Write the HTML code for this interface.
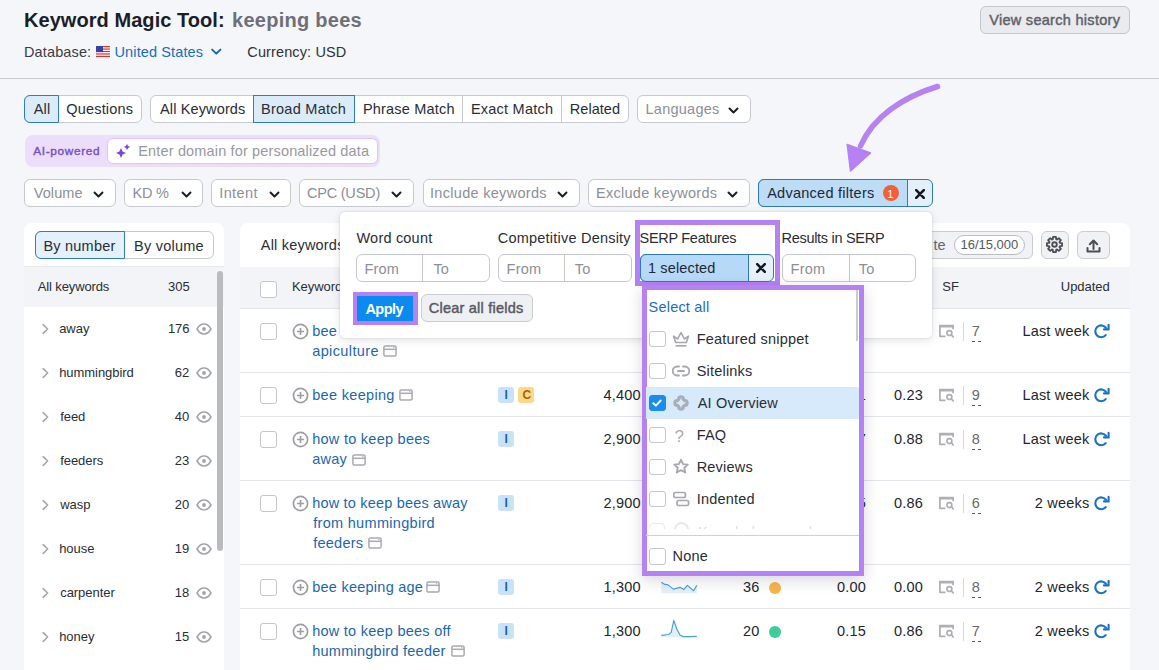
<!DOCTYPE html>
<html><head><meta charset="utf-8"><title>Keyword Magic Tool</title>
<style>
html,body{margin:0;padding:0;}
body{width:1159px;height:670px;overflow:hidden;position:relative;background:#f5f6f9;font-family:"Liberation Sans", sans-serif;}
.b{position:absolute;}
.t{position:absolute;white-space:nowrap;line-height:0;}
</style></head><body>
<svg class="b" style="left:96px;top:46px;z-index:1" width="14" height="11" viewBox="0 0 14 11">
<rect width="14" height="11" fill="#fff"/>
<g fill="#d8322f"><rect y="0" width="14" height="1.2"/><rect y="2.45" width="14" height="1.2"/><rect y="4.9" width="14" height="1.2"/><rect y="7.35" width="14" height="1.2"/><rect y="9.8" width="14" height="1.2"/></g>
<rect width="7" height="6.1" fill="#3b3f9e"/></svg>
<svg class="b" style="left:210.5px;top:48px;z-index:1" width="11" height="8" viewBox="0 0 11 8"><path d="M1.2 1.6 L5.3 5.6 L9.4 1.6" fill="none" stroke="#1b67ad" stroke-width="2" stroke-linecap="round" stroke-linejoin="round"/></svg>
<div class="b" style="left:980px;top:6px;width:150px;height:28px;background:#e9ebef;border-radius:6px;z-index:0;box-sizing:border-box;border:1px solid #c3c6cd;"></div>
<div class="b" style="left:0px;top:78px;width:1159px;height:1px;background:#c9cbd1;border-radius:0px;z-index:0;"></div>
<div class="b" style="left:24px;top:95px;width:118px;height:28px;background:#fff;border-radius:6px;z-index:0;box-sizing:border-box;border:1px solid #c6c9d0;"></div>
<div class="b" style="left:24px;top:95px;width:35px;height:28px;background:#dcebf8;border-radius:6px 0 0 6px;z-index:1;box-sizing:border-box;border:1px solid #2f7cc0;"></div>
<div class="b" style="left:150px;top:95px;width:479px;height:28px;background:#fff;border-radius:6px;z-index:0;box-sizing:border-box;border:1px solid #c6c9d0;"></div>
<div class="b" style="left:253px;top:95px;width:102px;height:28px;background:#dcebf8;border-radius:0px;z-index:1;box-sizing:border-box;border:1px solid #2f7cc0;"></div>
<div class="b" style="left:462px;top:96px;width:1px;height:26px;background:#c6c9d0;border-radius:0px;z-index:1;"></div>
<div class="b" style="left:561px;top:96px;width:1px;height:26px;background:#c6c9d0;border-radius:0px;z-index:1;"></div>
<div class="b" style="left:637px;top:95px;width:114px;height:28px;background:#fff;border-radius:6px;z-index:0;box-sizing:border-box;border:1px solid #c6c9d0;"></div>
<svg class="b" style="left:728.3px;top:106.5px;z-index:2" width="11" height="7" viewBox="0 0 11 7"><path d="M1.5 1.5 L5.5 5.5 L9.5 1.5" fill="none" stroke="#1b1e27" stroke-width="2" stroke-linecap="round" stroke-linejoin="round"/></svg>
<div class="b" style="left:25px;top:135px;width:355px;height:32px;background:#ecdefa;border-radius:8px;z-index:0;"></div>
<div class="b" style="left:107px;top:138px;width:271px;height:26px;background:#fff;border-radius:6px;z-index:1;box-sizing:border-box;border:1px solid #dcc6f7;"></div>
<svg class="b" style="left:115px;top:143px;z-index:2" width="16" height="16" viewBox="0 0 16 16">
<path d="M6 5 L7.6 8.4 L11 10 L7.6 11.6 L6 15 L4.4 11.6 L1 10 L4.4 8.4 Z" fill="#7c45e0"/>
<path d="M12 0.9 L13.1 2.9 L15.1 4 L13.1 5.1 L12 7.1 L10.9 5.1 L8.9 4 L10.9 2.9 Z" fill="#7c45e0"/></svg>
<div class="b" style="left:24px;top:179px;width:92px;height:28px;background:#fff;border-radius:6px;z-index:0;box-sizing:border-box;border:1px solid #c6c9d0;"></div>
<svg class="b" style="left:93.3px;top:190.5px;z-index:2" width="11" height="7" viewBox="0 0 11 7"><path d="M1.5 1.5 L5.5 5.5 L9.5 1.5" fill="none" stroke="#1b1e27" stroke-width="2" stroke-linecap="round" stroke-linejoin="round"/></svg>
<div class="b" style="left:124px;top:179px;width:79px;height:28px;background:#fff;border-radius:6px;z-index:0;box-sizing:border-box;border:1px solid #c6c9d0;"></div>
<svg class="b" style="left:180.7px;top:190.5px;z-index:2" width="11" height="7" viewBox="0 0 11 7"><path d="M1.5 1.5 L5.5 5.5 L9.5 1.5" fill="none" stroke="#1b1e27" stroke-width="2" stroke-linecap="round" stroke-linejoin="round"/></svg>
<div class="b" style="left:211px;top:179px;width:80px;height:28px;background:#fff;border-radius:6px;z-index:0;box-sizing:border-box;border:1px solid #c6c9d0;"></div>
<svg class="b" style="left:268.5px;top:190.5px;z-index:2" width="11" height="7" viewBox="0 0 11 7"><path d="M1.5 1.5 L5.5 5.5 L9.5 1.5" fill="none" stroke="#1b1e27" stroke-width="2" stroke-linecap="round" stroke-linejoin="round"/></svg>
<div class="b" style="left:299px;top:179px;width:115px;height:28px;background:#fff;border-radius:6px;z-index:0;box-sizing:border-box;border:1px solid #c6c9d0;"></div>
<svg class="b" style="left:390.8px;top:190.5px;z-index:2" width="11" height="7" viewBox="0 0 11 7"><path d="M1.5 1.5 L5.5 5.5 L9.5 1.5" fill="none" stroke="#1b1e27" stroke-width="2" stroke-linecap="round" stroke-linejoin="round"/></svg>
<div class="b" style="left:423px;top:179px;width:157px;height:28px;background:#fff;border-radius:6px;z-index:0;box-sizing:border-box;border:1px solid #c6c9d0;"></div>
<svg class="b" style="left:557.2px;top:190.5px;z-index:2" width="11" height="7" viewBox="0 0 11 7"><path d="M1.5 1.5 L5.5 5.5 L9.5 1.5" fill="none" stroke="#1b1e27" stroke-width="2" stroke-linecap="round" stroke-linejoin="round"/></svg>
<div class="b" style="left:588px;top:179px;width:162px;height:28px;background:#fff;border-radius:6px;z-index:0;box-sizing:border-box;border:1px solid #c6c9d0;"></div>
<svg class="b" style="left:727.3px;top:190.5px;z-index:2" width="11" height="7" viewBox="0 0 11 7"><path d="M1.5 1.5 L5.5 5.5 L9.5 1.5" fill="none" stroke="#1b1e27" stroke-width="2" stroke-linecap="round" stroke-linejoin="round"/></svg>
<div class="b" style="left:758px;top:179px;width:175px;height:28px;background:#e3eff9;border-radius:6px;z-index:0;box-sizing:border-box;border:1px solid #2f79bd;"></div>
<div class="b" style="left:758px;top:179px;width:150px;height:28px;background:#bddcf6;border-radius:6px 0 0 6px;z-index:1;box-sizing:border-box;border:1px solid #2f79bd;"></div>
<div class="b" style="left:883px;top:185px;width:16px;height:16px;border-radius:50%;background:#f2603b;z-index:2"></div>
<svg class="b" style="left:915px;top:188.5px;z-index:2" width="10" height="10" viewBox="0 0 10 10"><path d="M1.2 1.2 L8.8 8.8 M8.8 1.2 L1.2 8.8" stroke="#15181f" stroke-width="2.6" stroke-linecap="round"/></svg>
<div class="b" style="left:24px;top:223px;width:200px;height:460px;background:#fff;border-radius:8px;z-index:0;"></div>
<div class="b" style="left:35px;top:231px;width:179px;height:28px;background:#fff;border-radius:6px;z-index:1;box-sizing:border-box;border:1px solid #c6c9d0;"></div>
<div class="b" style="left:35px;top:231px;width:90px;height:28px;background:#e4f1fc;border-radius:6px 0 0 6px;z-index:2;box-sizing:border-box;border:1px solid #2f7cc0;"></div>
<div class="b" style="left:24px;top:266px;width:200px;height:1px;background:#e6e8ec;border-radius:0px;z-index:1;"></div>
<div class="b" style="left:24px;top:267px;width:200px;height:40px;background:#f3f4f8;border-radius:0px;z-index:1;"></div>
<div class="b" style="left:217px;top:271px;width:6px;height:280px;background:#b9bbbf;border-radius:3px;z-index:3;"></div>
<svg class="b" style="left:40.8px;top:322.5px;z-index:2" width="10" height="12" viewBox="0 0 10 12"><path d="M2.2 1.6 L6.6 6 L2.2 10.4" fill="none" stroke="#a6a8ad" stroke-width="1.6" stroke-linecap="round" stroke-linejoin="round"/></svg>
<svg class="b" style="left:196px;top:322.5px;z-index:2" width="16" height="12" viewBox="0 0 16 12"><path d="M1 6 C3.2 2.1 5.5 1 8 1 C10.5 1 12.8 2.1 15 6 C12.8 9.9 10.5 11 8 11 C5.5 11 3.2 9.9 1 6 Z" fill="none" stroke="#a2a4aa" stroke-width="1.6"/><circle cx="8" cy="6" r="1.9" fill="#a2a4aa"/></svg>
<svg class="b" style="left:40.8px;top:366.5px;z-index:2" width="10" height="12" viewBox="0 0 10 12"><path d="M2.2 1.6 L6.6 6 L2.2 10.4" fill="none" stroke="#a6a8ad" stroke-width="1.6" stroke-linecap="round" stroke-linejoin="round"/></svg>
<svg class="b" style="left:196px;top:366.5px;z-index:2" width="16" height="12" viewBox="0 0 16 12"><path d="M1 6 C3.2 2.1 5.5 1 8 1 C10.5 1 12.8 2.1 15 6 C12.8 9.9 10.5 11 8 11 C5.5 11 3.2 9.9 1 6 Z" fill="none" stroke="#a2a4aa" stroke-width="1.6"/><circle cx="8" cy="6" r="1.9" fill="#a2a4aa"/></svg>
<svg class="b" style="left:40.8px;top:410.5px;z-index:2" width="10" height="12" viewBox="0 0 10 12"><path d="M2.2 1.6 L6.6 6 L2.2 10.4" fill="none" stroke="#a6a8ad" stroke-width="1.6" stroke-linecap="round" stroke-linejoin="round"/></svg>
<svg class="b" style="left:196px;top:410.5px;z-index:2" width="16" height="12" viewBox="0 0 16 12"><path d="M1 6 C3.2 2.1 5.5 1 8 1 C10.5 1 12.8 2.1 15 6 C12.8 9.9 10.5 11 8 11 C5.5 11 3.2 9.9 1 6 Z" fill="none" stroke="#a2a4aa" stroke-width="1.6"/><circle cx="8" cy="6" r="1.9" fill="#a2a4aa"/></svg>
<svg class="b" style="left:40.8px;top:454.5px;z-index:2" width="10" height="12" viewBox="0 0 10 12"><path d="M2.2 1.6 L6.6 6 L2.2 10.4" fill="none" stroke="#a6a8ad" stroke-width="1.6" stroke-linecap="round" stroke-linejoin="round"/></svg>
<svg class="b" style="left:196px;top:454.5px;z-index:2" width="16" height="12" viewBox="0 0 16 12"><path d="M1 6 C3.2 2.1 5.5 1 8 1 C10.5 1 12.8 2.1 15 6 C12.8 9.9 10.5 11 8 11 C5.5 11 3.2 9.9 1 6 Z" fill="none" stroke="#a2a4aa" stroke-width="1.6"/><circle cx="8" cy="6" r="1.9" fill="#a2a4aa"/></svg>
<svg class="b" style="left:40.8px;top:498.5px;z-index:2" width="10" height="12" viewBox="0 0 10 12"><path d="M2.2 1.6 L6.6 6 L2.2 10.4" fill="none" stroke="#a6a8ad" stroke-width="1.6" stroke-linecap="round" stroke-linejoin="round"/></svg>
<svg class="b" style="left:196px;top:498.5px;z-index:2" width="16" height="12" viewBox="0 0 16 12"><path d="M1 6 C3.2 2.1 5.5 1 8 1 C10.5 1 12.8 2.1 15 6 C12.8 9.9 10.5 11 8 11 C5.5 11 3.2 9.9 1 6 Z" fill="none" stroke="#a2a4aa" stroke-width="1.6"/><circle cx="8" cy="6" r="1.9" fill="#a2a4aa"/></svg>
<svg class="b" style="left:40.8px;top:542.5px;z-index:2" width="10" height="12" viewBox="0 0 10 12"><path d="M2.2 1.6 L6.6 6 L2.2 10.4" fill="none" stroke="#a6a8ad" stroke-width="1.6" stroke-linecap="round" stroke-linejoin="round"/></svg>
<svg class="b" style="left:196px;top:542.5px;z-index:2" width="16" height="12" viewBox="0 0 16 12"><path d="M1 6 C3.2 2.1 5.5 1 8 1 C10.5 1 12.8 2.1 15 6 C12.8 9.9 10.5 11 8 11 C5.5 11 3.2 9.9 1 6 Z" fill="none" stroke="#a2a4aa" stroke-width="1.6"/><circle cx="8" cy="6" r="1.9" fill="#a2a4aa"/></svg>
<svg class="b" style="left:40.8px;top:586.5px;z-index:2" width="10" height="12" viewBox="0 0 10 12"><path d="M2.2 1.6 L6.6 6 L2.2 10.4" fill="none" stroke="#a6a8ad" stroke-width="1.6" stroke-linecap="round" stroke-linejoin="round"/></svg>
<svg class="b" style="left:196px;top:586.5px;z-index:2" width="16" height="12" viewBox="0 0 16 12"><path d="M1 6 C3.2 2.1 5.5 1 8 1 C10.5 1 12.8 2.1 15 6 C12.8 9.9 10.5 11 8 11 C5.5 11 3.2 9.9 1 6 Z" fill="none" stroke="#a2a4aa" stroke-width="1.6"/><circle cx="8" cy="6" r="1.9" fill="#a2a4aa"/></svg>
<svg class="b" style="left:40.8px;top:630.5px;z-index:2" width="10" height="12" viewBox="0 0 10 12"><path d="M2.2 1.6 L6.6 6 L2.2 10.4" fill="none" stroke="#a6a8ad" stroke-width="1.6" stroke-linecap="round" stroke-linejoin="round"/></svg>
<svg class="b" style="left:196px;top:630.5px;z-index:2" width="16" height="12" viewBox="0 0 16 12"><path d="M1 6 C3.2 2.1 5.5 1 8 1 C10.5 1 12.8 2.1 15 6 C12.8 9.9 10.5 11 8 11 C5.5 11 3.2 9.9 1 6 Z" fill="none" stroke="#a2a4aa" stroke-width="1.6"/><circle cx="8" cy="6" r="1.9" fill="#a2a4aa"/></svg>
<div class="b" style="left:240px;top:223px;width:890px;height:460px;background:#fff;border-radius:8px;z-index:0;"></div>
<div class="b" style="left:900px;top:231px;width:133px;height:28px;background:#f1f2f5;border-radius:6px;z-index:1;box-sizing:border-box;border:1px solid #c9ccd2;"></div>
<div class="b" style="left:954px;top:235px;width:71px;height:20px;background:#fff;border-radius:10px;z-index:2;box-sizing:border-box;border:1px solid #b9bcc3;"></div>
<div class="b" style="left:1041px;top:231px;width:28px;height:28px;background:#f1f2f5;border-radius:6px;z-index:1;box-sizing:border-box;border:1px solid #c9ccd2;"></div>
<div class="b" style="left:1077px;top:231px;width:33px;height:28px;background:#f1f2f5;border-radius:6px;z-index:1;box-sizing:border-box;border:1px solid #c9ccd2;"></div>
<svg class="b" style="left:1046.4px;top:236.3px;z-index:2" width="17" height="17" viewBox="0 0 17 17"><path d="M13.85 6.85 L16.06 7.05 L16.06 9.95 L13.85 10.15 L13.45 11.11 L14.88 12.82 L12.82 14.88 L11.11 13.45 L10.15 13.85 L9.95 16.06 L7.05 16.06 L6.85 13.85 L5.89 13.45 L4.18 14.88 L2.12 12.82 L3.55 11.11 L3.15 10.15 L0.94 9.95 L0.94 7.05 L3.15 6.85 L3.55 5.89 L2.12 4.18 L4.18 2.12 L5.89 3.55 L6.85 3.15 L7.05 0.94 L9.95 0.94 L10.15 3.15 L11.11 3.55 L12.82 2.12 L14.88 4.18 L13.45 5.89 Z" fill="none" stroke="#4a4d55" stroke-width="1.8" stroke-linejoin="round"/><circle cx="8.5" cy="8.5" r="2.3" fill="none" stroke="#4a4d55" stroke-width="1.9"/></svg>
<svg class="b" style="left:1085.5px;top:238.5px;z-index:2" width="15" height="14" viewBox="0 0 15 14"><path d="M7.5 10 V2 M3.8 5.2 L7.5 1.5 L11.2 5.2" fill="none" stroke="#4a4d55" stroke-width="2" stroke-linecap="round" stroke-linejoin="round"/><path d="M1.5 9 V12.5 H13.5 V9" fill="none" stroke="#4a4d55" stroke-width="2" stroke-linecap="round" stroke-linejoin="round"/></svg>
<div class="b" style="left:240px;top:267px;width:890px;height:42px;background:#f3f4f8;border-radius:0px;z-index:1;"></div>
<div class="b" style="left:240px;top:308px;width:890px;height:1px;background:#e3e5ea;border-radius:0px;z-index:1;"></div>
<div class="b" style="left:260px;top:281px;width:17px;height:17px;background:#fff;border-radius:3px;z-index:2;box-sizing:border-box;border:1px solid #c3c6cc;"></div>
<div class="b" style="left:240px;top:372px;width:890px;height:1px;background:#e3e5ea;border-radius:0px;z-index:1;"></div>
<div class="b" style="left:240px;top:416px;width:890px;height:1px;background:#e3e5ea;border-radius:0px;z-index:1;"></div>
<div class="b" style="left:240px;top:480px;width:890px;height:1px;background:#e3e5ea;border-radius:0px;z-index:1;"></div>
<div class="b" style="left:240px;top:564px;width:890px;height:1px;background:#e3e5ea;border-radius:0px;z-index:1;"></div>
<div class="b" style="left:240px;top:608px;width:890px;height:1px;background:#e3e5ea;border-radius:0px;z-index:1;"></div>
<div class="b" style="left:260px;top:323px;width:17px;height:17px;background:#fff;border-radius:3px;z-index:2;box-sizing:border-box;border:1px solid #c3c6cc;"></div>
<svg class="b" style="left:291.5px;top:322.5px;z-index:2" width="17" height="17" viewBox="0 0 17 17"><circle cx="8.5" cy="8.5" r="7.1" fill="none" stroke="#9c9ea4" stroke-width="1.7"/><path d="M8.5 4.9 V12.1 M4.9 8.5 H12.1" stroke="#9c9ea4" stroke-width="1.7"/></svg>
<svg class="b" style="left:938px;top:323.5px;z-index:2" width="17" height="15" viewBox="0 0 17 15"><path d="M7.5 12.3 H1.9 V1.6 H15.1 V5.2" fill="none" stroke="#adafb4" stroke-width="1.7" stroke-linejoin="round"/><rect x="1.2" y="0.9" width="14.6" height="2.6" rx="0.8" fill="#adafb4"/><circle cx="11.4" cy="9.1" r="2.5" fill="none" stroke="#adafb4" stroke-width="1.6"/><path d="M13.2 10.9 L15.2 12.9" stroke="#adafb4" stroke-width="1.7" stroke-linecap="round"/></svg>
<div class="b" style="left:963px;top:322px;width:1px;height:19px;background:#d9dbe0;border-radius:0px;z-index:2;"></div>
<div class="b" style="left:972px;top:340.8px;width:9px;height:0;border-top:1.5px dashed #55585f;z-index:2"></div>
<svg class="b" style="left:1093px;top:323px;z-index:2" width="17" height="17" viewBox="0 0 17 17"><path d="M13.03 4.92 A5.9 5.9 0 1 0 12.72 12.09" fill="none" stroke="#1b72c4" stroke-width="2.1" stroke-linecap="round"/><path d="M11 6.4 H15.6 V1.8" fill="none" stroke="#1b72c4" stroke-width="2.1" stroke-linecap="round" stroke-linejoin="round"/></svg>
<div class="b" style="left:260px;top:387px;width:17px;height:17px;background:#fff;border-radius:3px;z-index:2;box-sizing:border-box;border:1px solid #c3c6cc;"></div>
<svg class="b" style="left:291.5px;top:386.5px;z-index:2" width="17" height="17" viewBox="0 0 17 17"><circle cx="8.5" cy="8.5" r="7.1" fill="none" stroke="#9c9ea4" stroke-width="1.7"/><path d="M8.5 4.9 V12.1 M4.9 8.5 H12.1" stroke="#9c9ea4" stroke-width="1.7"/></svg>
<div class="b" style="left:498px;top:387px;width:16px;height:16px;background:#c8e3f9;border-radius:3px;z-index:2;"></div>
<div class="b" style="left:518px;top:387px;width:16px;height:16px;background:#fdd889;border-radius:3px;z-index:2;"></div>
<svg class="b" style="left:938px;top:387.5px;z-index:2" width="17" height="15" viewBox="0 0 17 15"><path d="M7.5 12.3 H1.9 V1.6 H15.1 V5.2" fill="none" stroke="#adafb4" stroke-width="1.7" stroke-linejoin="round"/><rect x="1.2" y="0.9" width="14.6" height="2.6" rx="0.8" fill="#adafb4"/><circle cx="11.4" cy="9.1" r="2.5" fill="none" stroke="#adafb4" stroke-width="1.6"/><path d="M13.2 10.9 L15.2 12.9" stroke="#adafb4" stroke-width="1.7" stroke-linecap="round"/></svg>
<div class="b" style="left:963px;top:386px;width:1px;height:19px;background:#d9dbe0;border-radius:0px;z-index:2;"></div>
<div class="b" style="left:972px;top:404.8px;width:9px;height:0;border-top:1.5px dashed #55585f;z-index:2"></div>
<svg class="b" style="left:1093px;top:387px;z-index:2" width="17" height="17" viewBox="0 0 17 17"><path d="M13.03 4.92 A5.9 5.9 0 1 0 12.72 12.09" fill="none" stroke="#1b72c4" stroke-width="2.1" stroke-linecap="round"/><path d="M11 6.4 H15.6 V1.8" fill="none" stroke="#1b72c4" stroke-width="2.1" stroke-linecap="round" stroke-linejoin="round"/></svg>
<div class="b" style="left:260px;top:431px;width:17px;height:17px;background:#fff;border-radius:3px;z-index:2;box-sizing:border-box;border:1px solid #c3c6cc;"></div>
<svg class="b" style="left:291.5px;top:430.5px;z-index:2" width="17" height="17" viewBox="0 0 17 17"><circle cx="8.5" cy="8.5" r="7.1" fill="none" stroke="#9c9ea4" stroke-width="1.7"/><path d="M8.5 4.9 V12.1 M4.9 8.5 H12.1" stroke="#9c9ea4" stroke-width="1.7"/></svg>
<div class="b" style="left:498px;top:431px;width:16px;height:16px;background:#c8e3f9;border-radius:3px;z-index:2;"></div>
<svg class="b" style="left:938px;top:431.5px;z-index:2" width="17" height="15" viewBox="0 0 17 15"><path d="M7.5 12.3 H1.9 V1.6 H15.1 V5.2" fill="none" stroke="#adafb4" stroke-width="1.7" stroke-linejoin="round"/><rect x="1.2" y="0.9" width="14.6" height="2.6" rx="0.8" fill="#adafb4"/><circle cx="11.4" cy="9.1" r="2.5" fill="none" stroke="#adafb4" stroke-width="1.6"/><path d="M13.2 10.9 L15.2 12.9" stroke="#adafb4" stroke-width="1.7" stroke-linecap="round"/></svg>
<div class="b" style="left:963px;top:430px;width:1px;height:19px;background:#d9dbe0;border-radius:0px;z-index:2;"></div>
<div class="b" style="left:972px;top:448.8px;width:9px;height:0;border-top:1.5px dashed #55585f;z-index:2"></div>
<svg class="b" style="left:1093px;top:431px;z-index:2" width="17" height="17" viewBox="0 0 17 17"><path d="M13.03 4.92 A5.9 5.9 0 1 0 12.72 12.09" fill="none" stroke="#1b72c4" stroke-width="2.1" stroke-linecap="round"/><path d="M11 6.4 H15.6 V1.8" fill="none" stroke="#1b72c4" stroke-width="2.1" stroke-linecap="round" stroke-linejoin="round"/></svg>
<div class="b" style="left:260px;top:495px;width:17px;height:17px;background:#fff;border-radius:3px;z-index:2;box-sizing:border-box;border:1px solid #c3c6cc;"></div>
<svg class="b" style="left:291.5px;top:494.5px;z-index:2" width="17" height="17" viewBox="0 0 17 17"><circle cx="8.5" cy="8.5" r="7.1" fill="none" stroke="#9c9ea4" stroke-width="1.7"/><path d="M8.5 4.9 V12.1 M4.9 8.5 H12.1" stroke="#9c9ea4" stroke-width="1.7"/></svg>
<div class="b" style="left:498px;top:495px;width:16px;height:16px;background:#c8e3f9;border-radius:3px;z-index:2;"></div>
<svg class="b" style="left:938px;top:495.5px;z-index:2" width="17" height="15" viewBox="0 0 17 15"><path d="M7.5 12.3 H1.9 V1.6 H15.1 V5.2" fill="none" stroke="#adafb4" stroke-width="1.7" stroke-linejoin="round"/><rect x="1.2" y="0.9" width="14.6" height="2.6" rx="0.8" fill="#adafb4"/><circle cx="11.4" cy="9.1" r="2.5" fill="none" stroke="#adafb4" stroke-width="1.6"/><path d="M13.2 10.9 L15.2 12.9" stroke="#adafb4" stroke-width="1.7" stroke-linecap="round"/></svg>
<div class="b" style="left:963px;top:494px;width:1px;height:19px;background:#d9dbe0;border-radius:0px;z-index:2;"></div>
<div class="b" style="left:972px;top:512.8px;width:9px;height:0;border-top:1.5px dashed #55585f;z-index:2"></div>
<svg class="b" style="left:1093px;top:495px;z-index:2" width="17" height="17" viewBox="0 0 17 17"><path d="M13.03 4.92 A5.9 5.9 0 1 0 12.72 12.09" fill="none" stroke="#1b72c4" stroke-width="2.1" stroke-linecap="round"/><path d="M11 6.4 H15.6 V1.8" fill="none" stroke="#1b72c4" stroke-width="2.1" stroke-linecap="round" stroke-linejoin="round"/></svg>
<div class="b" style="left:260px;top:579px;width:17px;height:17px;background:#fff;border-radius:3px;z-index:2;box-sizing:border-box;border:1px solid #c3c6cc;"></div>
<svg class="b" style="left:291.5px;top:578.5px;z-index:2" width="17" height="17" viewBox="0 0 17 17"><circle cx="8.5" cy="8.5" r="7.1" fill="none" stroke="#9c9ea4" stroke-width="1.7"/><path d="M8.5 4.9 V12.1 M4.9 8.5 H12.1" stroke="#9c9ea4" stroke-width="1.7"/></svg>
<div class="b" style="left:498px;top:579px;width:16px;height:16px;background:#c8e3f9;border-radius:3px;z-index:2;"></div>
<div class="b" style="left:769px;top:581.5px;width:12px;height:12px;border-radius:50%;background:#f8b548;z-index:2"></div>
<svg class="b" style="left:938px;top:579.5px;z-index:2" width="17" height="15" viewBox="0 0 17 15"><path d="M7.5 12.3 H1.9 V1.6 H15.1 V5.2" fill="none" stroke="#adafb4" stroke-width="1.7" stroke-linejoin="round"/><rect x="1.2" y="0.9" width="14.6" height="2.6" rx="0.8" fill="#adafb4"/><circle cx="11.4" cy="9.1" r="2.5" fill="none" stroke="#adafb4" stroke-width="1.6"/><path d="M13.2 10.9 L15.2 12.9" stroke="#adafb4" stroke-width="1.7" stroke-linecap="round"/></svg>
<div class="b" style="left:963px;top:578px;width:1px;height:19px;background:#d9dbe0;border-radius:0px;z-index:2;"></div>
<div class="b" style="left:972px;top:596.8px;width:9px;height:0;border-top:1.5px dashed #55585f;z-index:2"></div>
<svg class="b" style="left:1093px;top:579px;z-index:2" width="17" height="17" viewBox="0 0 17 17"><path d="M13.03 4.92 A5.9 5.9 0 1 0 12.72 12.09" fill="none" stroke="#1b72c4" stroke-width="2.1" stroke-linecap="round"/><path d="M11 6.4 H15.6 V1.8" fill="none" stroke="#1b72c4" stroke-width="2.1" stroke-linecap="round" stroke-linejoin="round"/></svg>
<svg class="b" style="left:660px;top:581px;z-index:2" width="38" height="14" viewBox="0 0 38 14"><path d="M1.3 1.3 L4.9 3.4 L8 3.9 L13.3 8.1 L20 6.3 L23.7 8.6 L27.4 4.4 L33.6 9.7 L36.8 4.4 V12.3 H1.3 Z" fill="#e3eff9"/><path d="M1.3 1.3 L4.9 3.4 L8 3.9 L13.3 8.1 L20 6.3 L23.7 8.6 L27.4 4.4 L33.6 9.7 L36.8 4.4" fill="none" stroke="#4d9fe0" stroke-width="1.2" stroke-linejoin="round"/></svg>
<div class="b" style="left:260px;top:623px;width:17px;height:17px;background:#fff;border-radius:3px;z-index:2;box-sizing:border-box;border:1px solid #c3c6cc;"></div>
<svg class="b" style="left:291.5px;top:622.5px;z-index:2" width="17" height="17" viewBox="0 0 17 17"><circle cx="8.5" cy="8.5" r="7.1" fill="none" stroke="#9c9ea4" stroke-width="1.7"/><path d="M8.5 4.9 V12.1 M4.9 8.5 H12.1" stroke="#9c9ea4" stroke-width="1.7"/></svg>
<div class="b" style="left:498px;top:623px;width:16px;height:16px;background:#c8e3f9;border-radius:3px;z-index:2;"></div>
<div class="b" style="left:769px;top:625.5px;width:12px;height:12px;border-radius:50%;background:#3ccd98;z-index:2"></div>
<svg class="b" style="left:938px;top:623.5px;z-index:2" width="17" height="15" viewBox="0 0 17 15"><path d="M7.5 12.3 H1.9 V1.6 H15.1 V5.2" fill="none" stroke="#adafb4" stroke-width="1.7" stroke-linejoin="round"/><rect x="1.2" y="0.9" width="14.6" height="2.6" rx="0.8" fill="#adafb4"/><circle cx="11.4" cy="9.1" r="2.5" fill="none" stroke="#adafb4" stroke-width="1.6"/><path d="M13.2 10.9 L15.2 12.9" stroke="#adafb4" stroke-width="1.7" stroke-linecap="round"/></svg>
<div class="b" style="left:963px;top:622px;width:1px;height:19px;background:#d9dbe0;border-radius:0px;z-index:2;"></div>
<div class="b" style="left:972px;top:640.8px;width:9px;height:0;border-top:1.5px dashed #55585f;z-index:2"></div>
<svg class="b" style="left:1093px;top:623px;z-index:2" width="17" height="17" viewBox="0 0 17 17"><path d="M13.03 4.92 A5.9 5.9 0 1 0 12.72 12.09" fill="none" stroke="#1b72c4" stroke-width="2.1" stroke-linecap="round"/><path d="M11 6.4 H15.6 V1.8" fill="none" stroke="#1b72c4" stroke-width="2.1" stroke-linecap="round" stroke-linejoin="round"/></svg>
<svg class="b" style="left:660px;top:619px;z-index:2" width="38" height="20" viewBox="0 0 38 20"><path d="M1.3 16.3 L8.6 15.5 L11.2 13.4 L13.8 1.4 L16.9 10.3 L20 16 L23.2 17.6 L29.4 17.6 L36.8 17.3 V18.3 H1.3 Z" fill="#e3eff9"/><path d="M1.3 16.3 L8.6 15.5 L11.2 13.4 L13.8 1.4 L16.9 10.3 L20 16 L23.2 17.6 L29.4 17.6 L36.8 17.3" fill="none" stroke="#4d9fe0" stroke-width="1.2" stroke-linejoin="round"/></svg>
<svg class="b" style="left:383.4px;top:345px;z-index:2" width="14" height="12" viewBox="0 0 14 12"><rect x="0.9" y="0.9" width="12.2" height="10.2" rx="1.5" fill="none" stroke="#a9abb1" stroke-width="1.5"/><path d="M1 4.3 H13" stroke="#a9abb1" stroke-width="1.5"/><circle cx="10.8" cy="2.6" r="0.7" fill="#a9abb1"/></svg>
<svg class="b" style="left:399.4px;top:389px;z-index:2" width="14" height="12" viewBox="0 0 14 12"><rect x="0.9" y="0.9" width="12.2" height="10.2" rx="1.5" fill="none" stroke="#a9abb1" stroke-width="1.5"/><path d="M1 4.3 H13" stroke="#a9abb1" stroke-width="1.5"/><circle cx="10.8" cy="2.6" r="0.7" fill="#a9abb1"/></svg>
<svg class="b" style="left:352px;top:453.5px;z-index:2" width="14" height="12" viewBox="0 0 14 12"><rect x="0.9" y="0.9" width="12.2" height="10.2" rx="1.5" fill="none" stroke="#a9abb1" stroke-width="1.5"/><path d="M1 4.3 H13" stroke="#a9abb1" stroke-width="1.5"/><circle cx="10.8" cy="2.6" r="0.7" fill="#a9abb1"/></svg>
<svg class="b" style="left:368.4px;top:537px;z-index:2" width="14" height="12" viewBox="0 0 14 12"><rect x="0.9" y="0.9" width="12.2" height="10.2" rx="1.5" fill="none" stroke="#a9abb1" stroke-width="1.5"/><path d="M1 4.3 H13" stroke="#a9abb1" stroke-width="1.5"/><circle cx="10.8" cy="2.6" r="0.7" fill="#a9abb1"/></svg>
<svg class="b" style="left:426.4px;top:581px;z-index:2" width="14" height="12" viewBox="0 0 14 12"><rect x="0.9" y="0.9" width="12.2" height="10.2" rx="1.5" fill="none" stroke="#a9abb1" stroke-width="1.5"/><path d="M1 4.3 H13" stroke="#a9abb1" stroke-width="1.5"/><circle cx="10.8" cy="2.6" r="0.7" fill="#a9abb1"/></svg>
<svg class="b" style="left:451px;top:645px;z-index:2" width="14" height="12" viewBox="0 0 14 12"><rect x="0.9" y="0.9" width="12.2" height="10.2" rx="1.5" fill="none" stroke="#a9abb1" stroke-width="1.5"/><path d="M1 4.3 H13" stroke="#a9abb1" stroke-width="1.5"/><circle cx="10.8" cy="2.6" r="0.7" fill="#a9abb1"/></svg>
<div class="b" style="left:340px;top:212px;width:592px;height:126px;background:#fff;border-radius:5px;z-index:10;box-shadow:0 0 0 1px rgba(40,45,60,0.05), 0 2px 8px rgba(30,35,50,0.14);"></div>
<div class="b" style="left:356px;top:254px;width:134px;height:28px;background:#fff;border-radius:6px;z-index:11;box-sizing:border-box;border:1px solid #c6c9d0;"></div>
<div class="b" style="left:422px;top:255px;width:1px;height:26px;background:#c6c9d0;border-radius:0px;z-index:12;"></div>
<div class="b" style="left:498px;top:254px;width:134px;height:28px;background:#fff;border-radius:6px;z-index:11;box-sizing:border-box;border:1px solid #c6c9d0;"></div>
<div class="b" style="left:564px;top:255px;width:1px;height:26px;background:#c6c9d0;border-radius:0px;z-index:12;"></div>
<div class="b" style="left:782px;top:254px;width:134px;height:28px;background:#fff;border-radius:6px;z-index:11;box-sizing:border-box;border:1px solid #c6c9d0;"></div>
<div class="b" style="left:849px;top:255px;width:1px;height:26px;background:#c6c9d0;border-radius:0px;z-index:12;"></div>
<div class="b" style="left:353px;top:292px;width:65px;height:33px;background:#b581f3;border-radius:0px;z-index:11;"></div>
<div class="b" style="left:357px;top:296px;width:56px;height:25px;background:#0b8bef;border-radius:0px;z-index:12;"></div>
<div class="b" style="left:421px;top:294px;width:112px;height:28px;background:#eef0f3;border-radius:6px;z-index:11;box-sizing:border-box;border:1px solid #c9ccd2;"></div>
<div class="b" style="left:635px;top:220px;width:145px;height:66px;background:transparent;border-radius:0px;z-index:13;box-sizing:border-box;border:5px solid #b581f3;"></div>
<div class="b" style="left:640px;top:254px;width:134px;height:28px;background:#e6f1fb;border-radius:6px;z-index:14;box-sizing:border-box;border:1px solid #2f79bd;"></div>
<div class="b" style="left:640px;top:254px;width:109px;height:28px;background:#b6d9f7;border-radius:6px 0 0 6px;z-index:15;box-sizing:border-box;border:1px solid #2f79bd;"></div>
<svg class="b" style="left:756px;top:263px;z-index:16" width="10" height="10" viewBox="0 0 10 10"><path d="M1.2 1.2 L8.8 8.8 M8.8 1.2 L1.2 8.8" stroke="#15181f" stroke-width="2.6" stroke-linecap="round"/></svg>
<div class="b" style="left:642px;top:285px;width:222px;height:291px;background:#fff;border-radius:0px;z-index:20;box-sizing:border-box;border:5px solid #b581f3;box-shadow:0 4px 14px rgba(30,35,50,0.18);"></div>
<div class="b" style="left:856px;top:290px;width:2px;height:51px;background:#c9cbcf;border-radius:0px;z-index:22;"></div>
<div class="b" style="left:649px;top:331px;width:17px;height:16px;background:#fff;border-radius:3px;z-index:22;box-sizing:border-box;border:1px solid #c3c6cc;"></div>
<div class="b" style="left:649px;top:363px;width:17px;height:16px;background:#fff;border-radius:3px;z-index:22;box-sizing:border-box;border:1px solid #c3c6cc;"></div>
<div class="b" style="left:646px;top:387px;width:213px;height:32px;background:#d6eafb;border-radius:0px;z-index:21;"></div>
<div class="b" style="left:649px;top:395px;width:17px;height:16px;background:#1a8cf0;border-radius:3px;z-index:22;box-sizing:border-box;border:1px solid #1a8cf0;"></div>
<svg class="b" style="left:650px;top:396px;z-index:23" width="14" height="14" viewBox="0 0 14 14"><path d="M3.3 7.2 L5.9 9.6 L10.6 4.6" fill="none" stroke="#fff" stroke-width="2" stroke-linecap="round" stroke-linejoin="round"/></svg>
<div class="b" style="left:649px;top:427px;width:17px;height:16px;background:#fff;border-radius:3px;z-index:22;box-sizing:border-box;border:1px solid #c3c6cc;"></div>
<div class="b" style="left:649px;top:459px;width:17px;height:16px;background:#fff;border-radius:3px;z-index:22;box-sizing:border-box;border:1px solid #c3c6cc;"></div>
<div class="b" style="left:649px;top:491px;width:17px;height:16px;background:#fff;border-radius:3px;z-index:22;box-sizing:border-box;border:1px solid #c3c6cc;"></div>
<svg class="b" style="left:672px;top:331px;z-index:22" width="18" height="17" viewBox="0 0 18 17"><path d="M1.6 5.2 L5.6 8 L9 1.5 L12.4 8 L16.4 5.2 L14.4 11.5 H3.6 Z" fill="none" stroke="#a6a8ae" stroke-width="1.6" stroke-linejoin="round"/><path d="M3.6 14.8 H14.4" stroke="#a6a8ae" stroke-width="1.7"/></svg>
<svg class="b" style="left:672px;top:364px;z-index:22" width="18" height="14" viewBox="0 0 18 14"><path d="M7 2.5 H5.2 A4.5 4.5 0 0 0 5.2 11.5 H7 M11 2.5 H12.8 A4.5 4.5 0 0 1 12.8 11.5 H11 M6 7 H12" fill="none" stroke="#a6a8ae" stroke-width="1.8" stroke-linecap="round"/></svg>
<svg class="b" style="left:672px;top:394px;z-index:23" width="18" height="18" viewBox="0 0 18 18"><g fill="#a8aeb8"><circle cx="9" cy="5.2" r="3.9"/><circle cx="9" cy="12.8" r="3.9"/><circle cx="5.2" cy="9" r="3.9"/><circle cx="12.8" cy="9" r="3.9"/><rect x="5.2" y="5.2" width="7.6" height="7.6"/></g><path d="M9 3.6 Q9.9 8.1 14.4 9 Q9.9 9.9 9 14.4 Q8.1 9.9 3.6 9 Q8.1 8.1 9 3.6 Z" fill="#d6eafb"/></svg>
<svg class="b" style="left:672px;top:458px;z-index:22" width="18" height="17" viewBox="0 0 18 17"><path d="M9 1.8 L11.1 6.1 L15.8 6.6 L12.3 9.8 L13.2 14.5 L9 12.2 L4.8 14.5 L5.7 9.8 L2.2 6.6 L6.9 6.1 Z" fill="none" stroke="#a6a8ae" stroke-width="1.9" stroke-linejoin="round"/></svg>
<svg class="b" style="left:672px;top:491px;z-index:22" width="18" height="16" viewBox="0 0 18 16"><rect x="1.8" y="1.5" width="11.6" height="5" rx="1.6" fill="none" stroke="#a6a8ae" stroke-width="1.7"/><rect x="5" y="9.5" width="11.6" height="5" rx="1.6" fill="none" stroke="#a6a8ae" stroke-width="1.7"/></svg>
<div class="b" style="left:647px;top:520px;width:180px;height:9px;overflow:hidden;z-index:22;opacity:0.2"><div style="position:absolute;left:2px;top:3px;width:16px;height:16px;border:1px solid #9a9ca3;border-radius:4px;box-sizing:border-box"></div><div style="position:absolute;left:27px;top:2px;width:15px;height:15px;border:2px solid #8a8c93;border-radius:50%;box-sizing:border-box"></div><span style="position:absolute;left:51px;top:11.5px;font-size:14.5px;line-height:0;white-space:nowrap;color:#555;letter-spacing:0.2px;font-family:'Liberation Sans',sans-serif">Knowledge panel</span></div>
<div class="b" style="left:646px;top:535px;width:213px;height:1px;background:#cfd1d6;border-radius:0px;z-index:22;"></div>
<div class="b" style="left:649px;top:548px;width:17px;height:17px;background:#fff;border-radius:3px;z-index:22;box-sizing:border-box;border:1px solid #c3c6cc;"></div>
<style>.dd-none{z-index:22}</style>
<svg class="b" style="left:0;top:0;z-index:30" width="1159" height="670" viewBox="0 0 1159 670">
<path d="M937.5 86.5 C903 97 873 117 860.5 146" fill="none" stroke="#b581f3" stroke-width="5.5" stroke-linecap="round"/>
<path d="M847.2 144.5 L870.5 153 L850.5 171 Z" fill="#b581f3" stroke="#b581f3" stroke-width="1.5" stroke-linejoin="round"/></svg>
<span class="t" style="left:24.00px;top:20.00px;font-size:20px;font-weight:700;color:#1b1e27;z-index:1;letter-spacing:0.056px;">Keyword Magic Tool:</span>
<span class="t" style="left:232.00px;top:20.00px;font-size:20px;font-weight:700;color:#6d6f79;z-index:1;letter-spacing:0.273px;">keeping bees</span>
<span class="t" style="left:24.00px;top:52.00px;font-size:14.5px;font-weight:400;color:#3a3d45;z-index:1;letter-spacing:0.125px;">Database:</span>
<span class="t" style="left:114.50px;top:52.00px;font-size:14.5px;font-weight:400;color:#1a6ebd;z-index:1;letter-spacing:0.125px;">United States</span>
<span class="t" style="left:247.30px;top:52.00px;font-size:14.5px;font-weight:400;color:#2f323a;z-index:1;letter-spacing:0.125px;">Currency: USD</span>
<span class="t" style="left:989.20px;top:20.20px;font-size:14.5px;font-weight:400;color:#5f626b;z-index:1;letter-spacing:0.294px;-webkit-text-stroke:0.45px #5f626b;">View search history</span>
<span class="t" style="left:33.70px;top:109.30px;font-size:14.5px;font-weight:400;color:#2a2d36;z-index:3;letter-spacing:0.200px;">All</span>
<span class="t" style="left:66.20px;top:109.30px;font-size:14.5px;font-weight:400;color:#2a2d36;z-index:1;letter-spacing:0.200px;">Questions</span>
<span class="t" style="left:160.00px;top:109.30px;font-size:14.5px;font-weight:400;color:#2a2d36;z-index:1;letter-spacing:0.136px;">All Keywords</span>
<span class="t" style="left:261.00px;top:109.30px;font-size:14.5px;font-weight:400;color:#2a2d36;z-index:3;letter-spacing:0.270px;">Broad Match</span>
<span class="t" style="left:362.90px;top:109.30px;font-size:14.5px;font-weight:400;color:#2a2d36;z-index:1;letter-spacing:0.200px;">Phrase Match</span>
<span class="t" style="left:470.90px;top:109.30px;font-size:14.5px;font-weight:400;color:#2a2d36;z-index:1;letter-spacing:0.240px;">Exact Match</span>
<span class="t" style="left:569.80px;top:109.30px;font-size:14.5px;font-weight:400;color:#2a2d36;z-index:1;letter-spacing:0.033px;">Related</span>
<span class="t" style="left:645.50px;top:109.30px;font-size:14.5px;font-weight:400;color:#8c8f98;z-index:1;letter-spacing:0.250px;">Languages</span>
<span class="t" style="left:33.20px;top:151.00px;font-size:11.8px;font-weight:400;color:#7550cf;z-index:2;letter-spacing:0.667px;-webkit-text-stroke:0.4px #7550cf;">AI-powered</span>
<span class="t" style="left:138.30px;top:150.60px;font-size:14.5px;font-weight:400;color:#9699a2;z-index:2;letter-spacing:0.152px;">Enter domain for personalized data</span>
<span class="t" style="left:33.70px;top:192.50px;font-size:14.5px;font-weight:400;color:#8c8f98;z-index:1;letter-spacing:0.100px;">Volume</span>
<span class="t" style="left:132.50px;top:192.50px;font-size:14.5px;font-weight:400;color:#8c8f98;z-index:1;letter-spacing:-0.200px;">KD %</span>
<span class="t" style="left:219.20px;top:192.50px;font-size:14.5px;font-weight:400;color:#8c8f98;z-index:1;letter-spacing:0.420px;">Intent</span>
<span class="t" style="left:306.90px;top:192.50px;font-size:14.5px;font-weight:400;color:#8c8f98;z-index:1;letter-spacing:-0.200px;">CPC (USD)</span>
<span class="t" style="left:430.00px;top:192.50px;font-size:14.5px;font-weight:400;color:#8c8f98;z-index:1;letter-spacing:0.300px;">Include keywords</span>
<span class="t" style="left:596.00px;top:192.50px;font-size:14.5px;font-weight:400;color:#8c8f98;z-index:1;letter-spacing:0.280px;">Exclude keywords</span>
<span class="t" style="left:767.20px;top:192.50px;font-size:14.5px;font-weight:400;color:#1c2838;z-index:2;letter-spacing:0.260px;">Advanced filters</span>
<span class="t" style="left:887.30px;top:193.50px;font-size:11px;font-weight:400;color:#fff;z-index:3;">1</span>
<span class="t" style="left:43.40px;top:245.50px;font-size:14.5px;font-weight:400;color:#2a2d36;z-index:3;letter-spacing:0.225px;">By number</span>
<span class="t" style="left:134.00px;top:245.50px;font-size:14.5px;font-weight:400;color:#2a2d36;z-index:3;letter-spacing:0.238px;">By volume</span>
<span class="t" style="left:37.80px;top:287.00px;font-size:13px;font-weight:400;color:#2a2d36;z-index:2;letter-spacing:-0.136px;">All keywords</span>
<span class="t" style="left:168.10px;top:287.00px;font-size:13px;font-weight:400;color:#2a2d36;z-index:2;letter-spacing:-0.050px;">305</span>
<span class="t" style="left:59.20px;top:329.00px;font-size:13px;font-weight:400;color:#2a2d36;z-index:2;letter-spacing:-0.050px;">away</span>
<span class="t" style="left:167.90px;top:329.00px;font-size:13px;font-weight:400;color:#2a2d36;z-index:2;letter-spacing:-0.050px;">176</span>
<span class="t" style="left:59.20px;top:373.00px;font-size:13px;font-weight:400;color:#2a2d36;z-index:2;letter-spacing:-0.050px;">hummingbird</span>
<span class="t" style="left:174.85px;top:373.00px;font-size:13px;font-weight:400;color:#2a2d36;z-index:2;letter-spacing:-0.050px;">62</span>
<span class="t" style="left:60.20px;top:417.00px;font-size:13px;font-weight:400;color:#2a2d36;z-index:2;letter-spacing:-0.050px;">feed</span>
<span class="t" style="left:174.85px;top:417.00px;font-size:13px;font-weight:400;color:#2a2d36;z-index:2;letter-spacing:-0.050px;">40</span>
<span class="t" style="left:60.20px;top:461.00px;font-size:13px;font-weight:400;color:#2a2d36;z-index:2;letter-spacing:-0.050px;">feeders</span>
<span class="t" style="left:174.85px;top:461.00px;font-size:13px;font-weight:400;color:#2a2d36;z-index:2;letter-spacing:-0.050px;">23</span>
<span class="t" style="left:60.20px;top:505.00px;font-size:13px;font-weight:400;color:#2a2d36;z-index:2;letter-spacing:-0.050px;">wasp</span>
<span class="t" style="left:174.85px;top:505.00px;font-size:13px;font-weight:400;color:#2a2d36;z-index:2;letter-spacing:-0.050px;">20</span>
<span class="t" style="left:59.20px;top:549.00px;font-size:13px;font-weight:400;color:#2a2d36;z-index:2;letter-spacing:-0.050px;">house</span>
<span class="t" style="left:174.85px;top:549.00px;font-size:13px;font-weight:400;color:#2a2d36;z-index:2;letter-spacing:-0.050px;">19</span>
<span class="t" style="left:60.20px;top:593.00px;font-size:13px;font-weight:400;color:#2a2d36;z-index:2;letter-spacing:-0.050px;">carpenter</span>
<span class="t" style="left:174.85px;top:593.00px;font-size:13px;font-weight:400;color:#2a2d36;z-index:2;letter-spacing:-0.050px;">18</span>
<span class="t" style="left:59.20px;top:637.00px;font-size:13px;font-weight:400;color:#2a2d36;z-index:2;letter-spacing:-0.050px;">honey</span>
<span class="t" style="left:174.85px;top:637.00px;font-size:13px;font-weight:400;color:#2a2d36;z-index:2;letter-spacing:-0.050px;">15</span>
<span class="t" style="left:260.80px;top:245.10px;font-size:14.5px;font-weight:400;color:#2a2d36;z-index:2;letter-spacing:0.200px;">All keywords</span>
<span class="t" style="left:933.40px;top:244.50px;font-size:14.5px;font-weight:400;color:#62656d;z-index:2;letter-spacing:0.200px;">te</span>
<span class="t" style="left:960.50px;top:245.20px;font-size:13px;font-weight:400;color:#55585f;z-index:3;letter-spacing:-0.013px;">16/15,000</span>
<span class="t" style="left:292.00px;top:287.00px;font-size:13px;font-weight:400;color:#2a2d36;z-index:2;letter-spacing:-0.050px;">Keyword</span>
<span class="t" style="left:942.30px;top:287.10px;font-size:13px;font-weight:400;color:#2a2d36;z-index:2;letter-spacing:-0.050px;">SF</span>
<span class="t" style="left:1060.80px;top:287.10px;font-size:13px;font-weight:400;color:#2a2d36;z-index:2;letter-spacing:-0.050px;">Updated</span>
<span class="t" style="left:312.20px;top:331.00px;font-size:14.5px;font-weight:400;color:#1b67af;z-index:2;letter-spacing:0.250px;">bee</span>
<span class="t" style="left:312.20px;top:351.00px;font-size:14.5px;font-weight:400;color:#1b67af;z-index:2;letter-spacing:0.389px;">apiculture</span>
<span class="t" style="left:971.80px;top:331.00px;font-size:14.5px;font-weight:400;color:#66696f;z-index:2;">7</span>
<span class="t" style="left:1022.40px;top:331.00px;font-size:14.5px;font-weight:400;color:#23262e;z-index:2;letter-spacing:0.200px;">Last week</span>
<span class="t" style="left:312.20px;top:395.00px;font-size:14.5px;font-weight:400;color:#1b67af;z-index:2;letter-spacing:0.320px;">bee keeping</span>
<span class="t" style="left:504.50px;top:395.00px;font-size:12px;font-weight:700;color:#1b64ad;z-index:3;">I</span>
<span class="t" style="left:522.50px;top:395.00px;font-size:12px;font-weight:700;color:#a8640a;z-index:3;">C</span>
<span class="t" style="left:603.50px;top:395.00px;font-size:14.5px;font-weight:400;color:#23262e;z-index:2;letter-spacing:0.200px;">4,400</span>
<span class="t" style="left:836.90px;top:395.00px;font-size:14.5px;font-weight:400;color:#23262e;z-index:2;letter-spacing:0.200px;">0.71</span>
<span class="t" style="left:894.10px;top:395.00px;font-size:14.5px;font-weight:400;color:#23262e;z-index:2;letter-spacing:0.200px;">0.23</span>
<span class="t" style="left:971.80px;top:395.00px;font-size:14.5px;font-weight:400;color:#66696f;z-index:2;">9</span>
<span class="t" style="left:1022.40px;top:395.00px;font-size:14.5px;font-weight:400;color:#23262e;z-index:2;letter-spacing:0.200px;">Last week</span>
<span class="t" style="left:312.20px;top:439.00px;font-size:14.5px;font-weight:400;color:#1b67af;z-index:2;letter-spacing:0.267px;">how to keep bees</span>
<span class="t" style="left:312.20px;top:459.00px;font-size:14.5px;font-weight:400;color:#1b67af;z-index:2;letter-spacing:0.250px;">away</span>
<span class="t" style="left:504.50px;top:439.00px;font-size:12px;font-weight:700;color:#1b64ad;z-index:3;">I</span>
<span class="t" style="left:603.50px;top:439.00px;font-size:14.5px;font-weight:400;color:#23262e;z-index:2;letter-spacing:0.200px;">2,900</span>
<span class="t" style="left:836.90px;top:439.00px;font-size:14.5px;font-weight:400;color:#23262e;z-index:2;letter-spacing:0.200px;">0.37</span>
<span class="t" style="left:894.10px;top:439.00px;font-size:14.5px;font-weight:400;color:#23262e;z-index:2;letter-spacing:0.200px;">0.88</span>
<span class="t" style="left:971.80px;top:439.00px;font-size:14.5px;font-weight:400;color:#66696f;z-index:2;">8</span>
<span class="t" style="left:1022.40px;top:439.00px;font-size:14.5px;font-weight:400;color:#23262e;z-index:2;letter-spacing:0.200px;">Last week</span>
<span class="t" style="left:312.20px;top:503.00px;font-size:14.5px;font-weight:400;color:#1b67af;z-index:2;letter-spacing:0.185px;">how to keep bees away</span>
<span class="t" style="left:313.20px;top:523.00px;font-size:14.5px;font-weight:400;color:#1b67af;z-index:2;letter-spacing:0.307px;">from hummingbird</span>
<span class="t" style="left:313.20px;top:543.00px;font-size:14.5px;font-weight:400;color:#1b67af;z-index:2;letter-spacing:0.250px;">feeders</span>
<span class="t" style="left:504.50px;top:503.00px;font-size:12px;font-weight:700;color:#1b64ad;z-index:3;">I</span>
<span class="t" style="left:603.50px;top:503.00px;font-size:14.5px;font-weight:400;color:#23262e;z-index:2;letter-spacing:0.200px;">2,900</span>
<span class="t" style="left:836.90px;top:503.00px;font-size:14.5px;font-weight:400;color:#23262e;z-index:2;letter-spacing:0.200px;">0.35</span>
<span class="t" style="left:894.10px;top:503.00px;font-size:14.5px;font-weight:400;color:#23262e;z-index:2;letter-spacing:0.200px;">0.86</span>
<span class="t" style="left:971.80px;top:503.00px;font-size:14.5px;font-weight:400;color:#66696f;z-index:2;">6</span>
<span class="t" style="left:1034.80px;top:503.00px;font-size:14.5px;font-weight:400;color:#23262e;z-index:2;letter-spacing:0.200px;">2 weeks</span>
<span class="t" style="left:312.20px;top:587.00px;font-size:14.5px;font-weight:400;color:#1b67af;z-index:2;letter-spacing:0.250px;">bee keeping age</span>
<span class="t" style="left:504.50px;top:587.00px;font-size:12px;font-weight:700;color:#1b64ad;z-index:3;">I</span>
<span class="t" style="left:603.50px;top:587.00px;font-size:14.5px;font-weight:400;color:#23262e;z-index:2;letter-spacing:0.200px;">1,300</span>
<span class="t" style="left:743.00px;top:587.00px;font-size:14.5px;font-weight:400;color:#23262e;z-index:2;letter-spacing:0.200px;">36</span>
<span class="t" style="left:836.90px;top:587.00px;font-size:14.5px;font-weight:400;color:#23262e;z-index:2;letter-spacing:0.200px;">0.00</span>
<span class="t" style="left:894.10px;top:587.00px;font-size:14.5px;font-weight:400;color:#23262e;z-index:2;letter-spacing:0.200px;">0.00</span>
<span class="t" style="left:971.80px;top:587.00px;font-size:14.5px;font-weight:400;color:#66696f;z-index:2;">8</span>
<span class="t" style="left:1034.80px;top:587.00px;font-size:14.5px;font-weight:400;color:#23262e;z-index:2;letter-spacing:0.200px;">2 weeks</span>
<span class="t" style="left:312.20px;top:631.00px;font-size:14.5px;font-weight:400;color:#1b67af;z-index:2;letter-spacing:0.250px;">how to keep bees off</span>
<span class="t" style="left:312.20px;top:651.00px;font-size:14.5px;font-weight:400;color:#1b67af;z-index:2;letter-spacing:0.250px;">hummingbird feeder</span>
<span class="t" style="left:504.50px;top:631.00px;font-size:12px;font-weight:700;color:#1b64ad;z-index:3;">I</span>
<span class="t" style="left:603.50px;top:631.00px;font-size:14.5px;font-weight:400;color:#23262e;z-index:2;letter-spacing:0.200px;">1,300</span>
<span class="t" style="left:743.00px;top:631.00px;font-size:14.5px;font-weight:400;color:#23262e;z-index:2;letter-spacing:0.200px;">20</span>
<span class="t" style="left:836.90px;top:631.00px;font-size:14.5px;font-weight:400;color:#23262e;z-index:2;letter-spacing:0.200px;">0.15</span>
<span class="t" style="left:894.10px;top:631.00px;font-size:14.5px;font-weight:400;color:#23262e;z-index:2;letter-spacing:0.200px;">0.86</span>
<span class="t" style="left:971.80px;top:631.00px;font-size:14.5px;font-weight:400;color:#66696f;z-index:2;">7</span>
<span class="t" style="left:1034.80px;top:631.00px;font-size:14.5px;font-weight:400;color:#23262e;z-index:2;letter-spacing:0.200px;">2 weeks</span>
<span class="t" style="left:356.50px;top:237.80px;font-size:14.5px;font-weight:400;color:#2a2d36;z-index:11;letter-spacing:0.200px;">Word count</span>
<span class="t" style="left:497.70px;top:237.80px;font-size:14.5px;font-weight:400;color:#2a2d36;z-index:11;letter-spacing:0.222px;">Competitive Density</span>
<span class="t" style="left:639.50px;top:237.80px;font-size:14.5px;font-weight:400;color:#2a2d36;z-index:11;letter-spacing:-0.292px;">SERP Features</span>
<span class="t" style="left:781.50px;top:237.80px;font-size:14.5px;font-weight:400;color:#2a2d36;z-index:11;letter-spacing:-0.293px;">Results in SERP</span>
<span class="t" style="left:364.40px;top:268.50px;font-size:14.5px;font-weight:400;color:#8c8f98;z-index:12;letter-spacing:0.200px;">From</span>
<span class="t" style="left:433.40px;top:268.50px;font-size:14.5px;font-weight:400;color:#8c8f98;z-index:12;letter-spacing:0.200px;">To</span>
<span class="t" style="left:506.60px;top:268.50px;font-size:14.5px;font-weight:400;color:#8c8f98;z-index:12;letter-spacing:0.200px;">From</span>
<span class="t" style="left:574.70px;top:268.50px;font-size:14.5px;font-weight:400;color:#8c8f98;z-index:12;letter-spacing:0.200px;">To</span>
<span class="t" style="left:790.60px;top:268.50px;font-size:14.5px;font-weight:400;color:#8c8f98;z-index:12;letter-spacing:0.200px;">From</span>
<span class="t" style="left:858.70px;top:268.50px;font-size:14.5px;font-weight:400;color:#8c8f98;z-index:12;letter-spacing:0.200px;">To</span>
<span class="t" style="left:365.40px;top:308.80px;font-size:14.5px;font-weight:700;color:#fff;z-index:13;letter-spacing:-0.525px;">Apply</span>
<span class="t" style="left:428.80px;top:308.30px;font-size:14.5px;font-weight:400;color:#575a63;z-index:12;letter-spacing:0.220px;-webkit-text-stroke:0.45px #575a63;">Clear all fields</span>
<span class="t" style="left:647.90px;top:268.30px;font-size:14.5px;font-weight:400;color:#1c2838;z-index:16;letter-spacing:0.156px;">1 selected</span>
<span class="t" style="left:648.60px;top:306.70px;font-size:14.5px;font-weight:400;color:#1a6ebd;z-index:21;letter-spacing:0.200px;">Select all</span>
<span class="t" style="left:696.70px;top:338.70px;font-size:14.5px;font-weight:400;color:#2a2d36;z-index:22;letter-spacing:0.200px;">Featured snippet</span>
<span class="t" style="left:696.70px;top:370.70px;font-size:14.5px;font-weight:400;color:#2a2d36;z-index:22;letter-spacing:0.200px;">Sitelinks</span>
<span class="t" style="left:697.70px;top:402.70px;font-size:14.5px;font-weight:400;color:#2a2d36;z-index:22;letter-spacing:0.200px;">AI Overview</span>
<span class="t" style="left:696.70px;top:434.70px;font-size:14.5px;font-weight:400;color:#2a2d36;z-index:22;letter-spacing:0.200px;">FAQ</span>
<span class="t" style="left:696.70px;top:466.70px;font-size:14.5px;font-weight:400;color:#2a2d36;z-index:22;letter-spacing:0.200px;">Reviews</span>
<span class="t" style="left:696.70px;top:498.70px;font-size:14.5px;font-weight:400;color:#2a2d36;z-index:22;letter-spacing:0.200px;">Indented</span>
<span class="t" style="left:674.50px;top:436.50px;font-size:17px;font-weight:400;color:#a9abb1;z-index:22;">?</span>
<span class="t" style="left:672.60px;top:555.70px;font-size:14.5px;font-weight:400;color:#2a2d36;z-index:22;letter-spacing:0.200px;">None</span>
</body></html>
